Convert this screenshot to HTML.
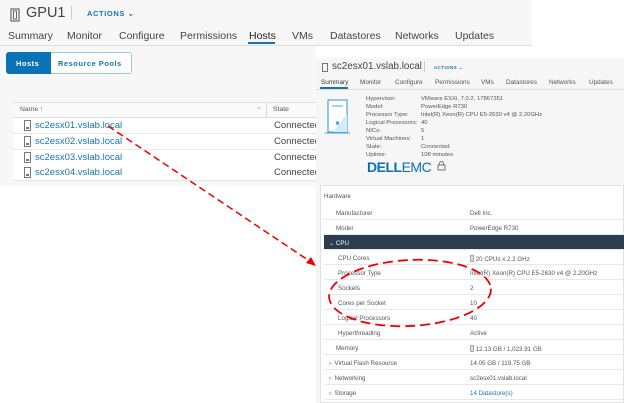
<!DOCTYPE html>
<html><head><style>
*{margin:0;padding:0;box-sizing:border-box}
body{width:624px;height:403px;overflow:hidden;background:#fff;font-family:"Liberation Sans",sans-serif;position:relative;color:#333}
.a{position:absolute;white-space:nowrap}
.lp{position:absolute;left:0;top:0;width:532px;height:46px;background:#f7f7f7}
.lp2{position:absolute;left:0;top:46px;width:316px;height:140px;background:#f7f7f7}
.tab{font-size:10.5px;color:#444}
.row{position:absolute;left:13px;width:303px;height:15.5px;border-bottom:1px solid #e6e6e6;background:#fff}
.row .n{position:absolute;left:22px;top:2px;font-size:9.5px;color:#1a73b0}
.row .s{position:absolute;left:261px;top:2px;font-size:9.5px;color:#444}
.rp{position:absolute;left:316px;top:58px;width:308px;height:345px;background:#f6f6f6}
.sm{font-size:6.4px;color:#555}
.sm2{font-size:5.9px;color:#555}
.hw{position:absolute;left:320px;top:185px;width:304px;height:218px;background:#fff;border:1px solid #e2e2e2}
.r{position:absolute;left:324px;width:300px;height:15px;border-bottom:1px solid #e8e8e8;font-size:6.2px;color:#555}
.r span{position:absolute;top:5px}
</style></head><body>
<div class="lp"></div><div class="lp2"></div>
<svg class="a" style="left:9px;top:8px" width="12" height="14" viewBox="0 0 12 14"><rect x="2" y="1" width="8" height="12" fill="none" stroke="#666" stroke-width="1.2"/><rect x="4.5" y="3" width="3" height="8" fill="none" stroke="#666"/></svg>
<div class="a" style="left:26px;top:5px;font-size:14.5px;color:#444">GPU1</div>
<div class="a" style="left:71px;top:6px;width:1px;height:14px;background:#ccc"></div>
<div class="a" style="left:87px;top:9px;font-size:7.5px;color:#1a73b0;font-weight:bold;letter-spacing:.6px">ACTIONS ⌄</div>
<div class="a tab" style="left:8px;top:30px">Summary</div>
<div class="a tab" style="left:67px;top:30px">Monitor</div>
<div class="a tab" style="left:119px;top:30px">Configure</div>
<div class="a tab" style="left:180px;top:30px">Permissions</div>
<div class="a tab" style="left:249px;top:30px;color:#222">Hosts</div>
<div class="a" style="left:248px;top:42px;width:27px;height:2px;background:#1a73b0"></div>
<div class="a tab" style="left:292px;top:30px">VMs</div>
<div class="a tab" style="left:330px;top:30px">Datastores</div>
<div class="a tab" style="left:395px;top:30px">Networks</div>
<div class="a tab" style="left:455px;top:30px">Updates</div>
<div class="a" style="left:0;top:45px;width:532px;height:1px;background:#ddd"></div>
<div class="a" style="left:6px;top:52px;width:126px;height:22px;border:1px solid #9cc8e3;border-radius:3px;background:#fff"></div>
<div class="a" style="left:6px;top:52px;width:45px;height:22px;background:#0b72b5;border-radius:3px 0 0 3px;color:#fff;font-size:7.5px;font-weight:bold;letter-spacing:.5px;padding:7px 0 0 10px">Hosts</div>
<div class="a" style="left:58px;top:59px;font-size:7.5px;font-weight:bold;letter-spacing:.5px;color:#1a73b0">Resource Pools</div>
<div class="a" style="left:13px;top:102px;width:303px;height:16px;background:#fafafa;border-top:1px solid #e0e0e0;border-bottom:1px solid #ddd"></div>
<div class="a" style="left:20px;top:106px;font-size:6.8px;color:#555">Name <span style="color:#1a73b0">↑</span></div>
<div class="a" style="left:256px;top:103px;font-size:7px;color:#999">⌄</div>
<div class="a" style="left:266px;top:102px;width:1px;height:16px;background:#ddd"></div>
<div class="a" style="left:273px;top:106px;font-size:6.8px;color:#555">State</div>
<div class="row" style="top:118px"><svg class="a" style="left:11px;top:2px" width="7" height="11"><rect x=".5" y=".5" width="6" height="10" fill="none" stroke="#777"/><rect x="2" y="7" width="3" height="2" fill="#777"/></svg><div class="n">sc2esx01.vslab.local</div><div class="s">Connected</div></div>
<div class="row" style="top:134px"><svg class="a" style="left:11px;top:2px" width="7" height="11"><rect x=".5" y=".5" width="6" height="10" fill="none" stroke="#777"/><rect x="2" y="7" width="3" height="2" fill="#777"/></svg><div class="n">sc2esx02.vslab.local</div><div class="s">Connected</div></div>
<div class="row" style="top:150px"><svg class="a" style="left:11px;top:2px" width="7" height="11"><rect x=".5" y=".5" width="6" height="10" fill="none" stroke="#777"/><rect x="2" y="7" width="3" height="2" fill="#777"/></svg><div class="n">sc2esx03.vslab.local</div><div class="s">Connected</div></div>
<div class="row" style="top:165px"><svg class="a" style="left:11px;top:2px" width="7" height="11"><rect x=".5" y=".5" width="6" height="10" fill="none" stroke="#777"/><rect x="2" y="7" width="3" height="2" fill="#777"/></svg><div class="n">sc2esx04.vslab.local</div><div class="s">Connected</div></div>

<div class="rp"></div>
<svg class="a" style="left:322px;top:63px" width="6" height="9"><rect x=".5" y=".5" width="5" height="8" fill="none" stroke="#777"/></svg>
<div class="a" style="left:332px;top:61px;font-size:9.8px;color:#444">sc2esx01.vslab.local</div>
<div class="a" style="left:424px;top:61px;width:1px;height:11px;background:#ccc"></div>
<div class="a" style="left:434px;top:65px;font-size:4.5px;font-weight:bold;color:#1a73b0;letter-spacing:.4px">ACTIONS ⌄</div>
<div class="a sm" style="left:321px;top:79px;color:#333">Summary</div>
<div class="a" style="left:320px;top:87px;width:28px;height:1.5px;background:#1a73b0"></div>
<div class="a sm" style="left:360px;top:79px">Monitor</div>
<div class="a sm" style="left:395px;top:79px">Configure</div>
<div class="a sm" style="left:435px;top:79px">Permissions</div>
<div class="a sm" style="left:481px;top:79px">VMs</div>
<div class="a sm" style="left:506px;top:79px">Datastores</div>
<div class="a sm" style="left:549px;top:79px">Networks</div>
<div class="a sm" style="left:589px;top:79px">Updates</div>
<div class="a" style="left:316px;top:89px;width:308px;height:1px;background:#ddd"></div>
<svg class="a" style="left:325px;top:99px" width="25" height="35" viewBox="0 0 25 35"><rect x="3" y="1" width="19" height="32" fill="#fff" stroke="#49a3d8" stroke-width="1.2"/><line x1="7" y1="7" x2="18" y2="7" stroke="#49a3d8"/><path d="M22 15 L8 33 H22Z" fill="#d4eaf7"/><circle cx="12.5" cy="24" r="1.8" fill="#49a3d8"/><line x1="0" y1="34" x2="25" y2="34" stroke="#49a3d8"/></svg>
<div class="a sm2" style="left:366px;top:95px;line-height:8px">Hypervisor:<br>Model:<br>Processor Type:<br>Logical Processors:<br>NICs:<br>Virtual Machines:<br>State:<br>Uptime:</div>
<div class="a sm2" style="left:421px;top:95px;line-height:8px">VMware ESXi, 7.0.2, 17867351<br>PowerEdge R730<br>Intel(R) Xeon(R) CPU E5-2630 v4 @ 2.20GHz<br>40<br>5<br>1<br>Connected<br>108 minutes</div>
<div class="a" style="left:367px;top:159px;font-size:14px;font-weight:bold;color:#0b6fb8;letter-spacing:-.5px">DELL<span style="font-weight:normal">EMC</span></div>
<svg class="a" style="left:437px;top:161px" width="9" height="10"><rect x="1" y="4" width="7" height="5" fill="none" stroke="#777"/><path d="M2.5 4V2.5a2 2 0 0 1 4 0V4" fill="none" stroke="#777"/></svg>

<div class="hw"></div>
<div class="a" style="left:324px;top:193px;font-size:6.2px;color:#555">Hardware</div>
<div class="r" style="top:205px"><span style="left:12px">Manufacturer</span><span style="left:146px">Dell Inc.</span></div>
<div class="r" style="top:220px"><span style="left:12px">Model</span><span style="left:146px">PowerEdge R730</span></div>
<div class="r" style="top:235px;background:#2c3e4c;color:#fff"><span style="left:5px">⌄ CPU</span></div>
<div class="r" style="top:250px"><span style="left:14px">CPU Cores</span><span style="left:146px"><b style="display:inline-block;width:4px;height:7px;border:1px solid #aaa;background:#ddd;vertical-align:-1px"></b> 20 CPUs x 2.2 GHz</span></div>
<div class="r" style="top:265px"><span style="left:14px">Processor Type</span><span style="left:146px">Intel(R) Xeon(R) CPU E5-2630 v4 @ 2.20GHz</span></div>
<div class="r" style="top:280px"><span style="left:14px">Sockets</span><span style="left:146px">2</span></div>
<div class="r" style="top:295px"><span style="left:14px">Cores per Socket</span><span style="left:146px">10</span></div>
<div class="r" style="top:310px"><span style="left:14px">Logical Processors</span><span style="left:146px">40</span></div>
<div class="r" style="top:325px"><span style="left:14px">Hyperthreading</span><span style="left:146px">Active</span></div>
<div class="r" style="top:340px"><span style="left:12px">Memory</span><span style="left:146px"><b style="display:inline-block;width:4px;height:7px;border:1px solid #aaa;background:#ddd;vertical-align:-1px"></b> 12.13 GB / 1,023.91 GB</span></div>
<div class="r" style="top:355px"><span style="left:5px">›&nbsp; Virtual Flash Resource</span><span style="left:146px">14.05 GB / 119.75 GB</span></div>
<div class="r" style="top:370px"><span style="left:5px">›&nbsp; Networking</span><span style="left:146px">sc2esx01.vslab.local</span></div>
<div class="r" style="top:385px"><span style="left:5px">›&nbsp; Storage</span><span style="left:146px;color:#1a73b0">14 Datastore(s)</span></div>

<svg class="a" style="left:0;top:0" width="624" height="403">
<line x1="108" y1="126" x2="311" y2="262" stroke="#e00" stroke-width="1.5" stroke-dasharray="7,4"/>
<path d="M316 266 L306 263 L311 257Z" fill="#e00"/>
<ellipse cx="410" cy="293" rx="81" ry="33" fill="none" stroke="#e00" stroke-width="1.8" stroke-dasharray="10,5" transform="rotate(-3 410 293)"/>
</svg>
</body></html>
